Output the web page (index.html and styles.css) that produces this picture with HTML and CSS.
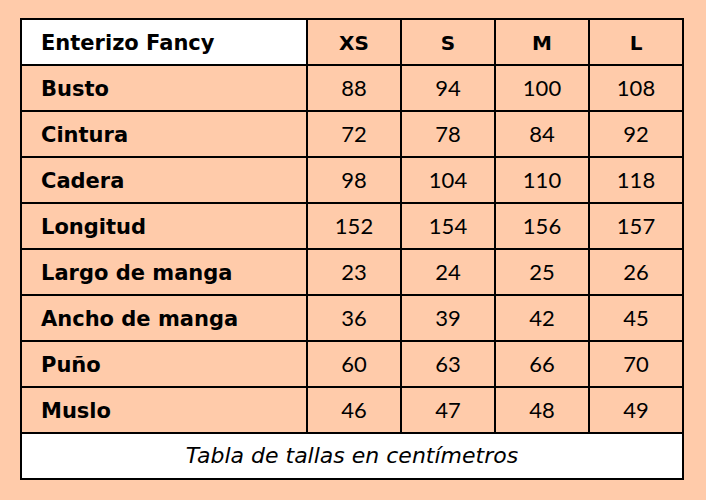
FILE: index.html
```html
<!DOCTYPE html>
<html lang="es">
<head>
<meta charset="utf-8">
<title>Enterizo Fancy - Tabla de tallas</title>
<link rel="stylesheet" href="styles.css">
</head>
<body>
<div class="size-table" role="table" aria-label="Tabla de tallas Enterizo Fancy">
  <div class="cell label head-title">Enterizo Fancy</div>
  <div class="cell size">XS</div>
  <div class="cell size">S</div>
  <div class="cell size">M</div>
  <div class="cell size">L</div>

  <div class="cell label">Busto</div>
  <div class="cell num">88</div><div class="cell num">94</div><div class="cell num">100</div><div class="cell num">108</div>

  <div class="cell label">Cintura</div>
  <div class="cell num">72</div><div class="cell num">78</div><div class="cell num">84</div><div class="cell num">92</div>

  <div class="cell label">Cadera</div>
  <div class="cell num">98</div><div class="cell num">104</div><div class="cell num">110</div><div class="cell num">118</div>

  <div class="cell label">Longitud</div>
  <div class="cell num">152</div><div class="cell num">154</div><div class="cell num">156</div><div class="cell num">157</div>

  <div class="cell label">Largo de manga</div>
  <div class="cell num">23</div><div class="cell num">24</div><div class="cell num">25</div><div class="cell num">26</div>

  <div class="cell label">Ancho de manga</div>
  <div class="cell num">36</div><div class="cell num">39</div><div class="cell num">42</div><div class="cell num">45</div>

  <div class="cell label">Puño</div>
  <div class="cell num">60</div><div class="cell num">63</div><div class="cell num">66</div><div class="cell num">70</div>

  <div class="cell label">Muslo</div>
  <div class="cell num">46</div><div class="cell num">47</div><div class="cell num">48</div><div class="cell num">49</div>

  <div class="cell caption">Tabla de tallas en centímetros</div>
</div>
</body>
</html>
```

FILE: styles.css
```css
html, body {
  margin: 0;
  padding: 0;
  background: #ffcbaa;
}

body {
  padding: 18px 22px 20px 20px;
  font-family: "Lato", "DejaVu Sans", sans-serif;
  color: #000;
}

.size-table {
  display: grid;
  grid-template-columns: 284px 92px 92px 92px 92px;
  grid-auto-rows: 44px;
  gap: 2px;
  padding: 2px;
  width: 660px;
  background: #000;
}

.cell {
  background: #ffcbaa;
  display: flex;
  align-items: center;
  justify-content: center;
  font-size: 22px;
  line-height: 1;
}

.label {
  justify-content: flex-start;
  padding: 2px 0 0 19px;
  font-family: "DejaVu Sans", sans-serif;
  font-size: 21px;
  font-weight: 700;
}

.head-title {
  background: #fff;
}

.size {
  padding-top: 2px;
  font-family: "DejaVu Sans", sans-serif;
  font-size: 20px;
  font-weight: 700;
}

.num {
  font-weight: 400;
}

.caption {
  grid-column: 1 / -1;
  background: #fff;
  font-family: "DejaVu Sans", sans-serif;
  font-style: italic;
  font-size: 22px;
}
```
